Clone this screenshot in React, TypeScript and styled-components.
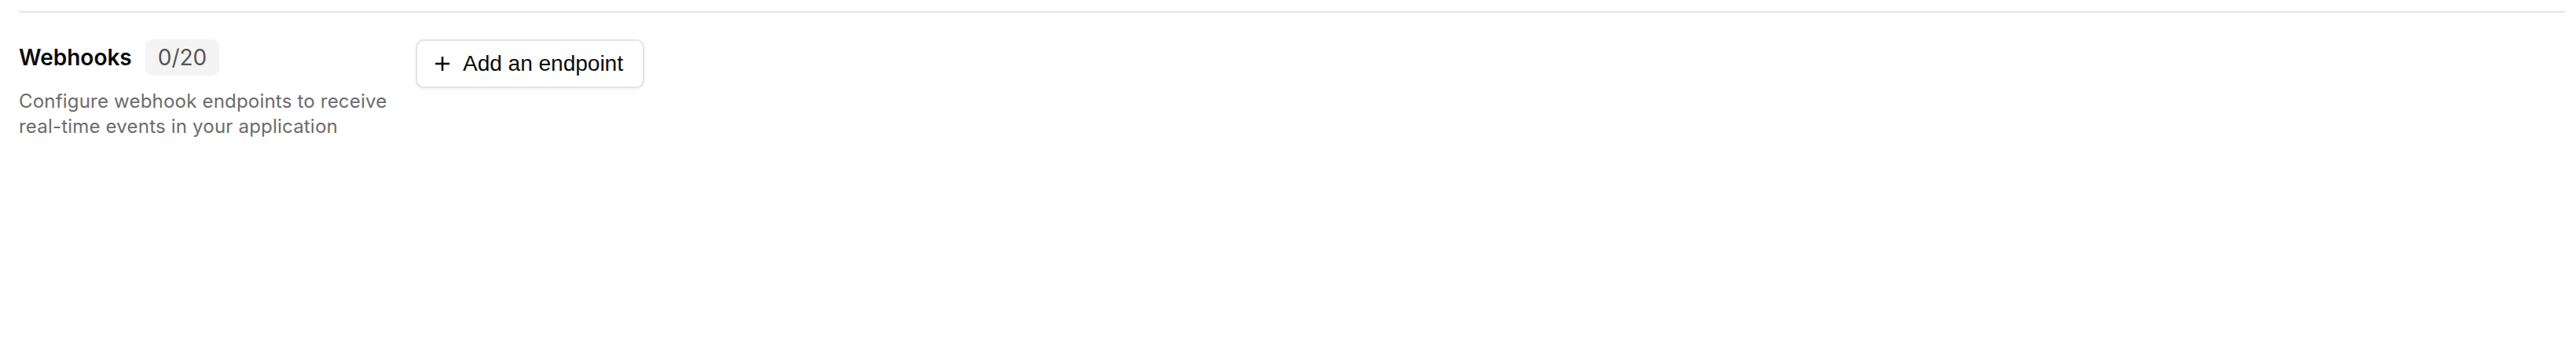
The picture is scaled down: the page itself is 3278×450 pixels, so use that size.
import React from 'react'
import styled, { createGlobalStyle } from 'styled-components'

const GlobalStyle = createGlobalStyle`
  body {
    margin: 0;
    background: #ffffff;
    font-family: Inter, "Noto Sans", sans-serif;
  }
`

const Page = styled.div`
  padding: 14px 14px 0 24px;
`

const Divider = styled.div`
  height: 2px;
  background: #e4e4e4;
`

const Section = styled.section`
  display: flex;
  align-items: flex-start;
  gap: 25px;
  padding-top: 34px;
`

const Info = styled.div`
  width: 480px;
  flex: none;
`

const TitleRow = styled.div`
  display: flex;
  align-items: center;
  gap: 17px;
  height: 46px;
`

const Title = styled.h2`
  margin: 0;
  font-size: 28px;
  font-weight: 600;
  color: #0a0a0a;
`

const CountBadge = styled.span`
  display: inline-flex;
  align-items: center;
  height: 46px;
  padding: 0 16px;
  border-radius: 9px;
  background: #f4f4f4;
  color: #555555;
  font-size: 28px;
  font-weight: 400;
`

const Description = styled.p`
  margin: 17px 0 0;
  font-size: 24px;
  line-height: 32px;
  letter-spacing: 0.2px;
  color: #6b6b6b;
`

const AddButton = styled.button`
  display: flex;
  align-items: center;
  gap: 16px;
  height: 62px;
  padding: 0 25px 0 22px;
  border: 2px solid #e3e3e3;
  border-radius: 10px;
  background: #ffffff;
  box-shadow: 0 2px 4px rgba(0, 0, 0, 0.05);
  font-family: "Liberation Sans", Arial, sans-serif;
  font-size: 28px;
  color: #0a0a0a;
  cursor: pointer;
`

const PlusIcon = () => (
  <svg width="20" height="20" viewBox="0 0 20 20" fill="none" stroke="#0a0a0a" strokeWidth="2.6" strokeLinecap="butt">
    <line x1="10" y1="1" x2="10" y2="19" />
    <line x1="1" y1="10" x2="19" y2="10" />
  </svg>
)

export default function App() {
  return (
    <>
      <GlobalStyle />
      <Page>
        <Divider />
        <Section>
          <Info>
            <TitleRow>
              <Title>Webhooks</Title>
              <CountBadge>0/20</CountBadge>
            </TitleRow>
            <Description>
              Configure webhook endpoints to receive real-time events in your application
            </Description>
          </Info>
          <AddButton>
            <PlusIcon />
            Add an endpoint
          </AddButton>
        </Section>
      </Page>
    </>
  )
}
